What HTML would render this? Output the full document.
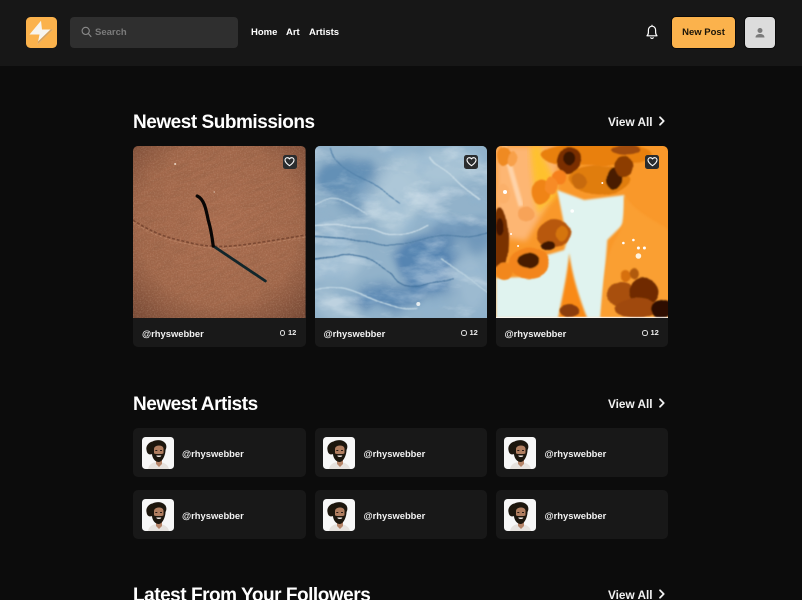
<!DOCTYPE html>
<html lang="en"><head><meta charset="utf-8"><title>Art</title>
<style>
*{box-sizing:border-box}
html,body{margin:0;padding:0;width:802px;height:600px;overflow:hidden;background:#0c0c0c;font-family:"Liberation Sans",sans-serif;color:#fff}
#p{position:relative;width:802px;height:600px;overflow:hidden;background:#0c0c0c}
.a{position:absolute}
.top{left:0;top:0;width:802px;height:66px;background:#171717}
.t{position:absolute;white-space:nowrap;font-weight:700}
h2{position:absolute;margin:0;font-size:19px;letter-spacing:-.47px;line-height:24px;font-weight:700;white-space:nowrap;left:133px;color:#fff}
.va{font-size:11.8px;line-height:16px;font-weight:700;left:608px;color:#f2f2f2}
.card{position:absolute;top:146px;width:172.5px;height:201px;background:#191919;border-radius:5px;overflow:hidden}
.card>svg.art{position:absolute;left:0;top:0;width:172.5px;height:172px;display:block}
.heart{position:absolute;top:8.5px;left:149.5px;width:14px;height:14px;background:#2a2c2e;border-radius:2.5px}
.heart svg{position:absolute;left:1.5px;top:1.5px}
.u{position:absolute;left:9px;top:181px;font-size:9.4px;line-height:12px;font-weight:700;color:#f2f2f2;white-space:nowrap;margin-top:.5px}
.c{position:absolute;left:155px;top:182px;font-size:7.5px;line-height:10px;font-weight:700;color:#eee}
.cb{position:absolute;left:146.5px;top:184px;width:5.5px;height:5.5px;border:1px solid #ddd;border-radius:50%}
.row{position:absolute;width:172.5px;height:49px;background:#181818;border-radius:5px}
.row svg{position:absolute;left:8.5px;top:8.5px;width:32px;height:32px}
.row span{position:absolute;left:49px;top:19.500px;font-size:9.4px;line-height:12px;font-weight:700;color:#f2f2f2;white-space:nowrap}
</style></head>
<body>
<div id="p">
<svg width="0" height="0" style="position:absolute">
<defs>
<filter id="sand" x="0" y="0" width="100%" height="100%">
<feTurbulence type="fractalNoise" baseFrequency="0.06 0.3" numOctaves="4" seed="4" result="n"/>
<feColorMatrix in="n" type="matrix" values="0 0 0 0 .24 0 0 0 0 .1 0 0 0 0 .05 1.1 0 0 0 -.4"/>
</filter>
<filter id="grain" x="0" y="0" width="100%" height="100%">
<feTurbulence type="fractalNoise" baseFrequency="0.7" numOctaves="2" seed="8" result="n"/>
<feColorMatrix in="n" type="matrix" values="0 0 0 0 .85 0 0 0 0 .6 0 0 0 0 .45 .9 0 0 0 -.38"/>
</filter>
<filter id="marble" x="-10%" y="-10%" width="120%" height="120%">
<feGaussianBlur stdDeviation="5" result="s"/>
<feTurbulence type="fractalNoise" baseFrequency="0.014" numOctaves="3" seed="11" result="n"/>
<feDisplacementMap in="s" in2="n" scale="38" xChannelSelector="R" yChannelSelector="G"/>
</filter>
<filter id="streakL" x="0" y="0" width="100%" height="100%">
<feTurbulence type="fractalNoise" baseFrequency="0.022 0.05" numOctaves="5" seed="21" result="n"/>
<feColorMatrix in="n" type="matrix" values="0 0 0 0 .82 0 0 0 0 .89 0 0 0 0 .93 3.5 0 0 0 -1.75"/>
</filter>
<filter id="streakD" x="0" y="0" width="100%" height="100%">
<feTurbulence type="fractalNoise" baseFrequency="0.03 0.045" numOctaves="5" seed="33" result="n"/>
<feColorMatrix in="n" type="matrix" values="0 0 0 0 .27 0 0 0 0 .45 0 0 0 0 .63 3.5 0 0 0 -1.8"/>
</filter>
<filter id="vein" x="-10%" y="-10%" width="120%" height="120%">
<feTurbulence type="fractalNoise" baseFrequency="0.02" numOctaves="2" seed="5" result="n"/>
<feDisplacementMap in="SourceGraphic" in2="n" scale="16" xChannelSelector="R" yChannelSelector="G"/>
<feGaussianBlur stdDeviation=".45"/>
</filter>
<filter id="wob" x="-10%" y="-10%" width="120%" height="120%">
<feTurbulence type="fractalNoise" baseFrequency="0.04" numOctaves="2" seed="3" result="n"/>
<feDisplacementMap in="SourceGraphic" in2="n" scale="6" xChannelSelector="R" yChannelSelector="G"/>
<feGaussianBlur stdDeviation=".7"/>
</filter>
<filter id="b3"><feGaussianBlur stdDeviation="3"/></filter>
<filter id="b1"><feGaussianBlur stdDeviation="1"/></filter>
<filter id="fb"><feGaussianBlur stdDeviation=".35"/></filter>
<radialGradient id="vig" cx="50%" cy="45%" r="78%"><stop offset="0" stop-color="#aa6d4f"/><stop offset=".6" stop-color="#a1674a"/><stop offset="1" stop-color="#6e4230"/></radialGradient>
<symbol id="face" viewBox="0 0 32 32">
<rect width="32" height="32" rx="3.500" fill="#f7f7f7"/>
<g filter="url(#fb)">
<path d="M6 32c1-5 5-7 10-7s10 2 11 7z" fill="#e6e2de"/>
<path d="M14 23h6v4l-3 3-3-3z" fill="#b58468"/>
<path d="M4.500 13C3.500 9 7 5 10.500 4.500 14 2.500 20 2.500 22.500 5.500c2 1.500 2.500 5 1 7.500 0 5-3 12-7 12s-6.500-5-6.500-8c-2 1-5 .5-5.500-4z" fill="#1a1410"/>
<path d="M12 12c0-2 2-3.500 5-3.500s4.500 1.500 4.500 3.500v4.500c0 3-2 4.500-4.700 4.500S12 19.500 12 16.500z" fill="#b07e60"/>
<path d="M11.500 16c1 .8 2 1 3 1h4.500c1 0 2-.2 3-1 0 5-2 8.500-5.200 8.500S11.500 21 11.500 16z" fill="#1c1410"/>
<path d="M14.300 18.500h5c0 1-1 1.500-2.500 1.500s-2.500-.5-2.500-1.500z" fill="#f3ece6"/>
<rect x="13.300" y="13" width="2" height="1" fill="#2a1c14"/><rect x="18" y="13" width="2" height="1" fill="#2a1c14"/>
</g>
</symbol>
<symbol id="h" viewBox="0 0 11 11"><path d="M5.500 9.700C2.600 7.600 1 6.100 1 4.100 1 2.600 2.100 1.700 3.300 1.700c.9 0 1.700.4 2.200 1.200.5-.8 1.300-1.200 2.200-1.200C8.900 1.700 10 2.600 10 4.100c0 2-1.600 3.500-4.500 5.600z" fill="none" stroke="#fff" stroke-width="1.100" stroke-linejoin="round"/></symbol>
<symbol id="chev" viewBox="0 0 10 12"><path d="M3 2.300 6.700 6 3 9.700" fill="none" stroke="#f2f2f2" stroke-width="1.800" stroke-linecap="round" stroke-linejoin="round"/></symbol>
</defs>
</svg>

<div class="a top"></div>
<!-- logo -->
<svg class="a" style="left:25px;top:16px" width="33" height="33" viewBox="0 0 33 33">
<rect x="1" y="1" width="31" height="31" rx="4.500" fill="#fbb24c"/>
<path d="M16 4.700 4.500 18.500H14.500L12.500 28.500 28 13.500H17z" fill="#f7f4ee"/>
<path d="M12.500 28.500 28 13.500 25.500 13.500 13 25.500z" fill="#d9a35c"/>
</svg>
<!-- search -->
<div class="a" style="left:70px;top:16.500px;width:168px;height:31.500px;background:#2f2f2f;border-radius:4px"></div>
<svg class="a" style="left:81px;top:26px" width="11" height="12" viewBox="0 0 11 12"><circle cx="4.700" cy="4.900" r="3.600" fill="none" stroke="#8a8a8a" stroke-width="1.100"/><path d="M7.500 7.800 10 10.600" stroke="#8a8a8a" stroke-width="1.100" stroke-linecap="round"/></svg>
<div class="t" style="left:95px;top:26px;font-size:9.500px;line-height:13px;color:#7b7b7b">Search</div>
<div class="t" style="left:251px;top:26px;font-size:9.500px;line-height:13px;color:#fff">Home</div>
<div class="t" style="left:286px;top:26px;font-size:9.500px;line-height:13px;color:#fff">Art</div>
<div class="t" style="left:309px;top:26px;font-size:9.500px;line-height:13px;color:#fff">Artists</div>
<!-- bell -->
<svg class="a" style="left:645px;top:24px" width="14" height="16" viewBox="0 0 14 16"><path d="M2 11.800h10c-1-1-1.400-2-1.400-3.500V6.200C10.600 4 9.200 2.200 7 2.200S3.400 4 3.400 6.200v2.100C3.400 9.800 3 10.800 2 11.800z" fill="none" stroke="#fff" stroke-width="1.200" stroke-linejoin="round"/><path d="M5.600 13.300c.2.800.8 1.200 1.400 1.200s1.200-.4 1.400-1.200" fill="none" stroke="#fff" stroke-width="1.100"/><path d="M7 .8v1.200" stroke="#fff" stroke-width="1.100"/></svg>
<!-- new post -->
<div class="a" style="left:671px;top:16px;width:65px;height:33px;background:#fbb24c;border-radius:5px;border:1px solid #0a0a0a"></div>
<div class="t" style="left:671.500px;width:64px;text-align:center;top:26px;font-size:9.500px;line-height:13px;color:#1a1408">New Post</div>
<!-- avatar -->
<div class="a" style="left:744px;top:16px;width:32px;height:33px;background:#dcdcdc;border-radius:5px;border:1px solid #0a0a0a"></div>
<svg class="a" style="left:754px;top:27px" width="12" height="12" viewBox="0 0 12 12"><circle cx="6" cy="3.500" r="2.500" fill="#7b7b7b"/><path d="M1.500 10.500c0-2.400 2-3.500 4.500-3.500s4.500 1.100 4.500 3.500z" fill="#7b7b7b"/></svg>

<h2 style="top:111px">Newest Submissions</h2>
<div class="t va" style="top:113.500px">View All</div>
<svg class="a" style="left:656.500px;top:115px" width="10" height="12"><use href="#chev"/></svg>

<!-- card 1 -->
<div class="card" style="left:133px">
<svg class="art" viewBox="0 0 172 172" preserveAspectRatio="none">
<rect width="172" height="172" fill="url(#vig)"/>
<g transform="rotate(-22 86 86)"><rect x="-60" y="-60" width="300" height="300" filter="url(#sand)" opacity=".55"/></g>
<rect width="172" height="172" filter="url(#grain)" opacity=".5"/>
<path d="M0 74C15 84 30 91 50 95 65 99 72 100 80 100 95 102 125 97 172 89" fill="none" stroke="#6d3d29" stroke-width="1.600" stroke-dasharray="3 1.800" opacity=".75"/>
<path d="M0 76C15 86 30 93 50 97 65 101 72 102 80 102 95 104 125 99 172 91" fill="none" stroke="#c79272" stroke-width=".9" stroke-dasharray="3 2" opacity=".55"/>
<path d="M80 100 132 135" stroke="#12262b" stroke-width="2.800" stroke-linecap="round"/>
<path d="M64 50C71 53 73 64 75 74 78 84 79 92 80 100" fill="none" stroke="#080605" stroke-width="3.200" stroke-linecap="round"/>
<circle cx="42" cy="18" r="1" fill="#e8d5c4"/><circle cx="81" cy="46" r=".6" fill="#e8d5c4"/>
</svg>
<div class="heart"><svg width="11" height="11"><use href="#h"/></svg></div>
<div class="u">@rhyswebber</div><div class="cb"></div><div class="c">12</div>
</div>
<!-- card 2 -->
<div class="card" style="left:314.500px">
<svg class="art" viewBox="0 0 172 172" preserveAspectRatio="none">
<rect width="172" height="172" fill="#8fb0c9"/>
<g filter="url(#marble)">
<rect x="-20" y="-20" width="220" height="220" fill="#92b2ca"/>
<ellipse cx="35" cy="35" rx="28" ry="20" fill="#6490b6"/>
<ellipse cx="48" cy="62" rx="16" ry="14" fill="#6f98ba"/>
<ellipse cx="120" cy="22" rx="50" ry="18" fill="#a9c4d6"/>
<path d="M62 20 115 50 90 95 50 70z" fill="#adc7d8"/>
<ellipse cx="15" cy="115" rx="45" ry="14" fill="#a8c3d6"/>
<ellipse cx="118" cy="120" rx="32" ry="32" fill="#5685b2"/>
<ellipse cx="70" cy="150" rx="38" ry="10" fill="#5383b0"/>
<ellipse cx="152" cy="85" rx="26" ry="14" fill="#6f97ba"/>
<ellipse cx="155" cy="135" rx="18" ry="30" fill="#9cbad0"/>
<ellipse cx="20" cy="155" rx="22" ry="16" fill="#a2bed2"/>
</g>
<rect width="172" height="172" filter="url(#streakL)" opacity=".4"/>
<rect width="172" height="172" filter="url(#streakD)" opacity=".35"/>
<g filter="url(#vein)" fill="none">
<path d="M-10 92C40 97 90 100 180 85" stroke="#4e7ba3" stroke-width="1"/>
<path d="M-10 112C30 105 60 108 80 125 90 140 110 145 140 135" stroke="#3f6f9a" stroke-width=".9"/>
<path d="M-10 84C40 78 60 92 110 80" stroke="#c9dbe6" stroke-width="1.300"/>
<path d="M20 0C30 25 60 35 85 55" stroke="#4f7fa8" stroke-width="1"/>
<path d="M-5 145C30 132 60 160 100 165" stroke="#bcd3e1" stroke-width="1.500"/>
<path d="M115 8 165 55" stroke="#c4d8e3" stroke-width="1.800"/>
<path d="M130 115 170 145" stroke="#bad1df" stroke-width="1.400"/>
<path d="M-5 60C20 50 35 55 50 70" stroke="#bcd2e0" stroke-width="1.200"/>
</g>
<circle cx="103" cy="158" r="2" fill="#e8eef0"/>
</svg>
<div class="heart"><svg width="11" height="11"><use href="#h"/></svg></div>
<div class="u">@rhyswebber</div><div class="cb"></div><div class="c">12</div>
</div>
<!-- card 3 -->
<div class="card" style="left:495.500px">
<svg class="art" viewBox="0 0 172 172" preserveAspectRatio="none">
<rect width="172" height="172" fill="#f9982a"/>
<path d="M0 0H62L60 44 30 95 0 90z" fill="#fdb673" filter="url(#b3)"/>
<path d="M8 0 25 60" stroke="#fee0c0" stroke-width="5" opacity=".7" filter="url(#b1)"/>
<path d="M45 0C48 20 62 30 60 50 52 60 50 55 42 70 38 45 36 25 34 0z" fill="#ffc41c" filter="url(#b3)" opacity=".8"/>
<path d="M61 44 88 54 128 49 128 77 111 94 105 172H0V132L28 131 44 111 68 104 71 94z" fill="#e0f3ef" filter="url(#b1)"/>
<path d="M128 49C140 70 172 80 172 85V172H104C107 140 108 110 120 92 126 84 128 70 128 49z" fill="#fa9f33" filter="url(#b1)"/>
<path d="M73 107C76 130 84 155 91 172H62C66 150 71 130 73 107z" fill="#f98a12" filter="url(#b1)"/>
<g filter="url(#wob)">
<ellipse cx="100" cy="8" rx="55" ry="12" fill="#e9800f"/>
<ellipse cx="73" cy="15" rx="12" ry="14" fill="#7a2f05"/><ellipse cx="73" cy="12" rx="6" ry="7" fill="#3a1503"/>
<ellipse cx="103" cy="34" rx="30" ry="14" fill="#e07d10"/>
<ellipse cx="84" cy="36" rx="8" ry="8" fill="#c76a0c"/>
<ellipse cx="118" cy="32" rx="8" ry="10" fill="#4a1b03"/>
<ellipse cx="127" cy="20" rx="9" ry="10" fill="#8d3c06"/>
<ellipse cx="130" cy="4" rx="14" ry="5" fill="#a04c08"/>
<ellipse cx="63" cy="32" rx="7" ry="8" fill="#f6801e"/>
<ellipse cx="45" cy="46" rx="9" ry="12" fill="#f08418"/>
<ellipse cx="55" cy="40" rx="6" ry="9" fill="#f78b26"/>
<ellipse cx="8" cy="48" rx="7" ry="10" fill="#fbb06a"/>
<ellipse cx="8" cy="10" rx="7" ry="10" fill="#ef8a24"/><ellipse cx="16" cy="12" rx="4" ry="8" fill="#f8a04a"/>
<ellipse cx="30" cy="68" rx="9" ry="7" fill="#f7a358"/>
<ellipse cx="58" cy="88" rx="17" ry="14" fill="#b8590b"/><ellipse cx="52" cy="100" rx="7" ry="5" fill="#3f1703"/><ellipse cx="66" cy="88" rx="6" ry="8" fill="#d57410"/>
<ellipse cx="33" cy="117" rx="20" ry="16" fill="#f3851a"/><ellipse cx="33" cy="114" rx="11" ry="8" fill="#4a1a03"/>
<ellipse cx="4" cy="94" rx="8" ry="32" fill="#7a3205"/><ellipse cx="4" cy="82" rx="4" ry="9" fill="#451903"/>
<ellipse cx="8" cy="126" rx="9" ry="9" fill="#f2871a"/>
<ellipse cx="125" cy="148" rx="15" ry="12" fill="#a84f0a"/><ellipse cx="148" cy="145" rx="15" ry="14" fill="#6f2c05"/>
<ellipse cx="140" cy="162" rx="22" ry="10" fill="#a04a09"/><ellipse cx="165" cy="163" rx="10" ry="10" fill="#2f1103"/>
<ellipse cx="129" cy="130" rx="5" ry="6" fill="#d76f0c"/><ellipse cx="138" cy="128" rx="5" ry="5" fill="#b05a0b"/>
<ellipse cx="74" cy="165" rx="9" ry="6" fill="#8b3c07"/>
</g>
<circle cx="142" cy="102" r="1.500" fill="#fff"/><circle cx="148" cy="102" r="1.500" fill="#fff"/><circle cx="142" cy="110" r="2.800" fill="#fff4e0"/><circle cx="127" cy="97" r="1.300" fill="#fff"/><circle cx="137" cy="94" r="1.300" fill="#fff"/><circle cx="9" cy="46" r="2" fill="#fff"/><circle cx="76" cy="65" r="1.800" fill="#fff"/><circle cx="106" cy="37" r="1" fill="#fff"/><circle cx="15" cy="88" r="1" fill="#fff"/><circle cx="22" cy="100" r="1" fill="#fff"/>
<rect y="170.800" width="172" height="1.200" fill="#fff" opacity=".8"/>
</svg>
<div class="heart"><svg width="11" height="11"><use href="#h"/></svg></div>
<div class="u">@rhyswebber</div><div class="cb"></div><div class="c">12</div>
</div>

<h2 style="top:393px">Newest Artists</h2>
<div class="t va" style="top:395.500px">View All</div>
<svg class="a" style="left:656.500px;top:397px" width="10" height="12"><use href="#chev"/></svg>

<div class="row" style="left:133px;top:428px"><svg><use href="#face"/></svg><span>@rhyswebber</span></div>
<div class="row" style="left:314.500px;top:428px"><svg><use href="#face"/></svg><span>@rhyswebber</span></div>
<div class="row" style="left:495.500px;top:428px"><svg><use href="#face"/></svg><span>@rhyswebber</span></div>
<div class="row" style="left:133px;top:490px"><svg><use href="#face"/></svg><span>@rhyswebber</span></div>
<div class="row" style="left:314.500px;top:490px"><svg><use href="#face"/></svg><span>@rhyswebber</span></div>
<div class="row" style="left:495.500px;top:490px"><svg><use href="#face"/></svg><span>@rhyswebber</span></div>

<h2 style="top:584px">Latest From Your Followers</h2>
<div class="t va" style="top:586.500px">View All</div>
<svg class="a" style="left:656.500px;top:588px" width="10" height="12"><use href="#chev"/></svg>
</div>
</body></html>
